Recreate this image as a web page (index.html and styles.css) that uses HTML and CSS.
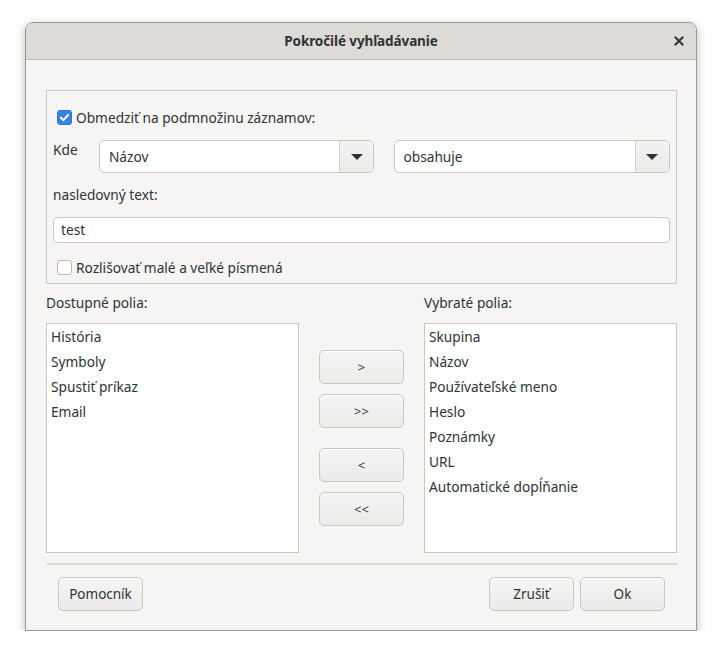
FILE: index.html
```html
<!DOCTYPE html>
<html lang="sk">
<head>
<meta charset="utf-8">
<title>Pokročilé vyhľadávanie</title>
<link rel="stylesheet" href="styles.css">
</head>
<body>
<div class="dialog">
  <div class="header">
    <span class="title">Pokročilé vyhľadávanie</span>
    <span class="close">
      <svg width="10" height="10" viewBox="0 0 10 10"><path d="M1.5 1.5 L8.5 8.5 M8.5 1.5 L1.5 8.5" stroke="#2e3436" stroke-width="2" stroke-linecap="square"/></svg>
    </span>
  </div>
  <div class="body">
    <div class="frame">
      <label class="check-row first">
        <span class="check on"><svg width="15" height="15" viewBox="0 0 15 15"><path d="M3.8 7.6 L6.4 10.1 L11.2 4.9" stroke="#fff" stroke-width="2" fill="none" stroke-linecap="round" stroke-linejoin="round"/></svg></span>
        <span>Obmedziť na podmnožinu záznamov:</span>
      </label>
      <div class="where-row">
        <span class="where-label">Kde</span>
        <div class="combo c1"><span class="combo-text">Názov</span><span class="combo-btn"><span class="tri"></span></span></div>
        <div class="combo c2"><span class="combo-text">obsahuje</span><span class="combo-btn"><span class="tri"></span></span></div>
      </div>
      <div class="text-label">nasledovný text:</div>
      <div class="entry">test</div>
      <label class="check-row last">
        <span class="check"></span>
        <span>Rozlišovať malé a veľké písmená</span>
      </label>
    </div>

    <div class="fields">
      <div class="col">
        <div class="col-label">Dostupné polia:</div>
        <div class="list">
          <div class="item">História</div>
          <div class="item">Symboly</div>
          <div class="item">Spustiť príkaz</div>
          <div class="item">Email</div>
        </div>
      </div>
      <div class="movers">
        <button class="btn mv">&gt;</button>
        <button class="btn mv g1">&gt;&gt;</button>
        <button class="btn mv g2">&lt;</button>
        <button class="btn mv g1">&lt;&lt;</button>
      </div>
      <div class="col">
        <div class="col-label">Vybraté polia:</div>
        <div class="list">
          <div class="item">Skupina</div>
          <div class="item">Názov</div>
          <div class="item">Používateľské meno</div>
          <div class="item">Heslo</div>
          <div class="item">Poznámky</div>
          <div class="item">URL</div>
          <div class="item">Automatické dopĺňanie</div>
        </div>
      </div>
    </div>

    <div class="sep"></div>

    <div class="actions">
      <button class="btn act">Pomocník</button>
      <div class="spacer"></div>
      <button class="btn act">Zrušiť</button>
      <button class="btn act">Ok</button>
    </div>
  </div>
</div>
</body>
</html>
```
FILE: styles.css
```css
html, body {
  margin: 0;
  padding: 0;
  background: #ffffff;
}
body {
  font-family: "Noto Sans", "Open Sans", sans-serif;
  font-size: 13.7px;
  color: #2e3436;
  padding: 22px 0 0 25px;
}
.dialog {
  width: 670px;
  height: 607px;
  border: 1px solid #9b9894;
  border-radius: 8px 8px 0 0;
  background: #f6f5f4;
  box-shadow: 0 3px 10px rgba(0,0,0,0.28);
  display: flex;
  flex-direction: column;
  overflow: hidden;
}
.header {
  height: 36px;
  flex: none;
  background: #dedbd7;
  border-bottom: 1px solid #bdb8b2;
  display: flex;
  align-items: center;
  justify-content: center;
  position: relative;
}
.title {
  font-weight: bold;
  font-size: 13.5px;
  letter-spacing: -0.1px;
  color: #2e3436;
}
.close {
  position: absolute;
  right: 12px;
  top: 13px;
  width: 10px;
  height: 10px;
  display: flex;
}
.body {
  flex: 1;
  padding: 30px 19px 0 20px;
  display: flex;
  flex-direction: column;
}
.frame {
  border: 1px solid #cdc8c3;
  height: 192px;
  padding: 0 6px 0 6px;
  display: flex;
  flex-direction: column;
}
.check-row {
  display: flex;
  align-items: center;
  gap: 4px;
  padding-left: 4px;
  height: 20px;
}
.check-row.first {
  margin-top: 16px;
}
.check-row.last {
  margin-top: 14px;
}
.check {
  width: 15px;
  height: 15px;
  box-sizing: border-box;
  border: 1px solid #bfb9b3;
  border-radius: 3px;
  background: #ffffff;
  display: flex;
  flex: none;
}
.check.on {
  background: #3584e4;
  border-color: #2a76d6;
}
.check.on svg {
  margin: -1px;
}
.where-row {
  display: flex;
  margin-top: 13px;
  height: 33px;
}
.where-label {
  width: 46px;
  line-height: 18px;
  margin-top: 1px;
}
.combo {
  height: 33px;
  box-sizing: border-box;
  border: 1px solid #cdc7c2;
  border-radius: 5px;
  background: #ffffff;
  display: flex;
  align-items: stretch;
  overflow: hidden;
}
.combo.c1 { width: 276px; }
.combo.c2 { width: 276px; margin-left: 20px; }
.combo-text {
  flex: 1;
  display: flex;
  align-items: center;
  padding-left: 8px;
}
.c1 .combo-text { padding-left: 9px; }
.combo-btn {
  width: 33px;
  border-left: 1px solid #d5d0cb;
  background: linear-gradient(#f4f3f2, #edebe9);
  display: flex;
  align-items: center;
  justify-content: center;
}
.tri {
  width: 0;
  height: 0;
  border-left: 6px solid transparent;
  border-right: 6px solid transparent;
  border-top: 6px solid #2e3436;
}
.text-label {
  margin-top: 12px;
  line-height: 20px;
}
.entry {
  margin-top: 12px;
  height: 26px;
  box-sizing: border-box;
  border: 1px solid #cdc7c2;
  border-radius: 4px;
  background: #ffffff;
  padding-left: 7px;
  line-height: 23px;
}
.fields {
  display: flex;
  margin-top: 9px;
}
.col {
  width: 253px;
  display: flex;
  flex-direction: column;
}
.col-label {
  line-height: 20px;
  height: 20px;
}
.list {
  margin-top: 10px;
  height: 230px;
  box-sizing: border-box;
  border: 1px solid #cdc7c2;
  background: #ffffff;
  padding: 1px 0 0 4px;
}
.item {
  height: 25px;
  line-height: 24px;
}
.movers {
  width: 125px;
  display: flex;
  flex-direction: column;
  align-items: flex-start;
  padding-top: 57px;
  padding-left: 20px;
  box-sizing: border-box;
}
.btn {
  font-family: "Noto Sans", "Open Sans", sans-serif;
  font-size: 14px;
  color: #2e3436;
  border: 1px solid #cdc7c2;
  border-radius: 5px;
  background: linear-gradient(#f6f5f4, #edebe9);
  box-shadow: inset 0 1px rgba(255,255,255,0.8);
  padding: 0;
  margin: 0;
  box-sizing: border-box;
}
.mv {
  width: 85px;
  height: 34px;
  font-size: 13px;
}
.mv.g1 { margin-top: 10px; }
.mv.g2 { margin-top: 20px; }
.sep {
  margin-top: 10px;
  margin-left: 1px;
  height: 2px;
  background: #dedbd7;
}
.actions {
  display: flex;
  margin-top: 12px;
  padding: 0 12px 0 12px;
  gap: 6px;
}
.spacer { flex: 1; }
.act {
  width: 85px;
  height: 34px;
  font-size: 13.5px;
}
```
